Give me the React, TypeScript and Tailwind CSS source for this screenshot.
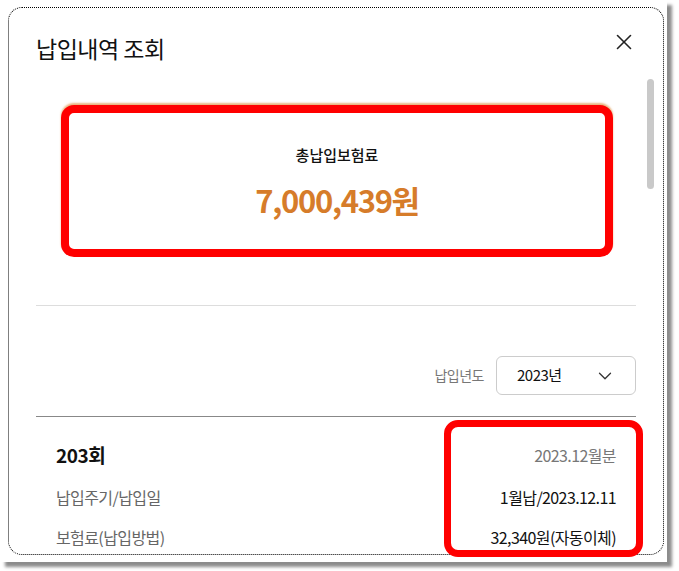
import { ChevronDown, X } from 'lucide-react';

const rows = [
  { label: '납입주기/납입일', value: '1월납/2023.12.11' },
  { label: '보험료(납입방법)', value: '32,340원(자동이체)' },
];

export default function App() {
  return (
    <div
      className="h-[571px] w-[679px] bg-white"
      style={{ fontFamily: '"Noto Sans CJK KR", "Noto Sans", sans-serif' }}
    >
      {/* screenshot frame */}
      <div className="relative h-[562px] w-[667px] bg-white pl-[8px] pt-[7px] shadow-[5px_5px_3px_rgba(0,0,0,0.45)]">
        <div className="relative h-[548px] w-[656px] overflow-hidden rounded-[14px] border border-dotted border-black bg-white">
          {/* Header */}
          <div className="flex items-center justify-between pl-[27px] pr-[26px] pt-[22px]">
            <h2 className="text-[23px] leading-[36px] font-normal text-[#111] tracking-[-0.5px]">
              납입내역 조회
            </h2>
            <X className="-mt-[12px] h-[26px] w-[26px] text-[#222]" strokeWidth={1.5} />
          </div>

          {/* Scrollbar */}
          <div className="absolute right-[9px] top-[71px] h-[110px] w-[7px] rounded-full bg-[#c9c9c9]" />

          <div className="px-[27px]">
            {/* Total */}
            <div className="mx-[25px] mt-[39px] flex h-[152px] w-[552px] flex-col items-center justify-center rounded-[13px] border-[8px] border-[#ff0000] bg-white shadow-[0_-2px_2px_rgba(217,130,43,0.6)]">
              <p className="text-[15px] font-medium leading-[20px] text-[#111]">총납입보험료</p>
              <p className="mt-[17px] text-[31px] font-bold leading-[36px] tracking-[-1.3px] text-[#d67c2a]">
                7,000,439원
              </p>
            </div>

            <div className="mt-[48px] h-px w-[600px] bg-[#dddddd]" />

            {/* Year select */}
            <div className="mt-[50px] flex w-[600px] items-center justify-end gap-[12px]">
              <span className="text-[14px] text-[#777] tracking-[-0.5px]">납입년도</span>
              <div className="flex h-[39px] w-[140px] items-center justify-between rounded-[6px] border border-[#cccccc] pl-[20px] pr-[19px]">
                <span className="text-[15px] text-[#111] tracking-[-0.5px]">2023년</span>
                <ChevronDown className="h-[22px] w-[22px] text-[#333]" strokeWidth={1.4} />
              </div>
            </div>

            <div className="mt-[21px] h-px w-[600px] bg-[#888888]" />

            {/* Record */}
            <div className="w-[600px] px-[20px]">
              <div className="flex items-center justify-between pt-[25px]">
                <span className="text-[19px] font-bold leading-[26px] tracking-[-0.5px] text-[#111]">203회</span>
                <span className="text-[16px] tracking-[-0.6px] text-[#777]">2023.12월분</span>
              </div>
              {rows.map((row) => (
                <div key={row.label} className="mt-[18px] flex items-center justify-between first:mt-[20px]">
                  <span className="text-[16px] leading-[22px] tracking-[-0.6px] text-[#666]">{row.label}</span>
                  <span className="text-[16px] leading-[22px] tracking-[-0.6px] text-[#111]">{row.value}</span>
                </div>
              ))}
            </div>
          </div>
        </div>

        {/* Red highlight overlay */}
        <div className="absolute left-[444px] top-[420px] h-[137px] w-[199px] rounded-[14px] border-[7px] border-[#ff0000]" />
      </div>
    </div>
  );
}
